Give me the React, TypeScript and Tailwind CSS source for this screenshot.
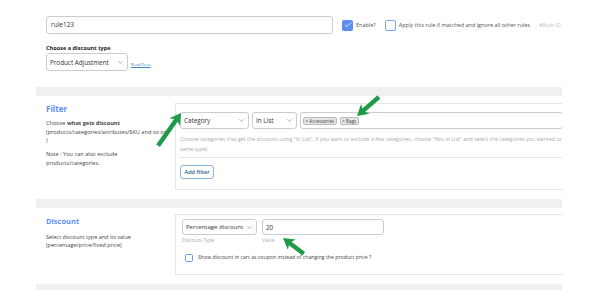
import { ChevronDown, Check } from 'lucide-react'

function Select({ label, className }: { label: string; className: string }) {
  return (
    <div
      className={`flex items-center justify-between whitespace-nowrap rounded-[3px] border border-[#c9cdd2] bg-white pl-[3px] pr-[3px] text-[6.3px] text-[#333] ${className}`}
    >
      <span>{label}</span>
      <ChevronDown size={7} strokeWidth={1.6} className="shrink-0 text-[#555]" />
    </div>
  )
}

function Arrow({ x, y, angle, len }: { x: number; y: number; angle: number; len: number }) {
  return (
    <polygon
      transform={`translate(${x},${y}) rotate(${angle})`}
      points={`0,0 -11,6.5 -9,2.2 -${len},2.2 -${len},-2.2 -9,-2.2 -11,-6.5`}
      fill="#1f9a48"
    />
  )
}

export default function App() {
  return (
    <div
      className="relative h-[306px] w-[602px] overflow-hidden bg-white text-[#3c434a]"
      style={{ fontFamily: '"Open Sans", "Noto Sans", sans-serif' }}
    >
      <div className="ml-[36px] w-[526px] overflow-hidden">
        {/* Top: rule name + options */}
        <div className="pl-[10px] pt-[16px] pb-[16px]">
          <div className="flex items-center">
            <div className="flex h-[18px] w-[287px] items-center rounded-[3px] border border-[#c9cdd2] pl-[4px] text-[6.5px] text-[#333]">
              rule123
            </div>
            <div className="ml-[9px] flex h-[11px] w-[11px] items-center justify-center rounded-[2px] bg-[#5b8def]">
              <Check size={8} strokeWidth={2.4} className="text-white" />
            </div>
            <span className="ml-[3px] text-[5.5px] text-[#555]">Enable?</span>
            <div className="ml-[9px] h-[11px] w-[11px] rounded-[2px] border border-[#7aa4f0] bg-white" />
            <span className="ml-[3px] whitespace-nowrap text-[5.5px] text-[#555]">
              Apply this rule if matched and ignore all other rules
            </span>
            <span className="ml-[9px] whitespace-nowrap text-[5.5px] text-[#c4c4c4]">#Rule ID</span>
          </div>
          <div className="mt-[10px] text-[5.6px] font-bold text-[#222]">Choose a discount type</div>
          <div className="mt-[1px] flex items-end">
            <Select label="Product Adjustment" className="h-[18px] w-[82px]" />
            <span className="ml-[3px] mb-[3px] text-[4px] text-[#3b82c4] underline">Read Docs</span>
          </div>
        </div>

        <div className="h-[9px] bg-[#f0f0f0]" />

        {/* Filter */}
        <div className="flex pt-[7px] pb-[9px]">
          <div className="w-[139px] shrink-0 pl-[10px]">
            <div className="text-[8px] font-bold text-[#5b8ff9]">Filter</div>
            <div className="mt-[4px] text-[5.6px] leading-[8.5px] text-[#444]">
              Choose <b>what gets discount</b>
              <br />
              <span className="whitespace-nowrap">(products/categories/attributes/SKU and so on</span>
              <br />)
            </div>
            <div className="mt-[5px] text-[5.6px] leading-[9px] text-[#444]">
              Note : You can also exclude
              <br />
              products/categories.
            </div>
          </div>
          <div className="h-[87px] w-[400px] shrink-0 border border-[#e6e6e6] px-[4px] pt-[8px]">
            <div className="flex gap-[3px]">
              <Select label="Category" className="h-[17px] w-[69px]" />
              <Select label="In List" className="h-[17px] w-[45px]" />
              <div className="flex h-[17px] w-[263px] items-center gap-[3px] rounded-[3px] border border-[#c9cdd2] pl-[2px]">
                <span className="rounded-[2px] border border-[#bbb] bg-[#e4e4e4] px-[1.5px] text-[4.6px] leading-[6.5px] text-[#444]">
                  × Accessories
                </span>
                <span className="rounded-[2px] border border-[#bbb] bg-[#e4e4e4] px-[1.5px] text-[4.6px] leading-[6.5px] text-[#444]">
                  × Bags
                </span>
              </div>
            </div>
            <div className="mt-[5px] whitespace-nowrap text-[5.3px] leading-[10px] text-[#a7aaad]">
              Choose categories that get the discount using "In List". If you want to exclude a few categories, choose "Not In List" and select the categories you wanted to
              <br />
              same type)
            </div>
            <div className="mt-[3px] h-px bg-[#e8e8e8]" />
            <div className="mt-[7px] flex h-[14px] w-[34px] items-center justify-center rounded-[3px] border border-[#8fb4d9] text-[5.6px] font-semibold text-[#2f5d8a]">
              Add filter
            </div>
          </div>
        </div>

        <div className="h-[9px] bg-[#f0f0f0]" />

        {/* Discount */}
        <div className="flex pt-[6px] pb-[9px]">
          <div className="w-[139px] shrink-0 pl-[10px] pt-[2px]">
            <div className="text-[7.5px] font-bold text-[#5b8ff9]">Discount</div>
            <div className="mt-[5px] text-[5.5px] leading-[8.5px] text-[#444]">
              Select discount type and its value
              <br />
              (percentage/price/fixed price)
            </div>
          </div>
          <div className="h-[61px] w-[400px] shrink-0 border border-[#e6e6e6] px-[6px] pt-[4px]">
            <div className="flex gap-[5px]">
              <div>
                <Select label="Percentage discount" className="h-[16px] w-[75px] !text-[6px]" />
                <div className="mt-[2px] text-[4.9px] text-[#a7aaad]">Discount Type</div>
              </div>
              <div>
                <div className="flex h-[16px] w-[122px] items-center rounded-[3px] border border-[#c9cdd2] pl-[3px] text-[6.3px] text-[#333]">
                  20
                </div>
                <div className="mt-[2px] text-[4.9px] text-[#a7aaad]">Value</div>
              </div>
            </div>
            <div className="mt-[9px] flex items-center">
              <div className="ml-[3px] h-[8px] w-[8px] rounded-[1.5px] border border-[#6f9ef0] bg-white" />
              <span className="ml-[5px] text-[5.2px] text-[#444]">
                Show discount in cart as coupon instead of changing the product price ?
              </span>
            </div>
          </div>
        </div>

        <div className="h-[6px] bg-[#f0f0f0]" />
      </div>

      <svg className="pointer-events-none absolute left-0 top-0" width="602" height="306">
        <Arrow x={181} y={113} angle={-55} len={40} />
        <Arrow x={357} y={116} angle={139} len={29} />
        <Arrow x={283} y={238} angle={-143} len={26} />
      </svg>
    </div>
  )
}
